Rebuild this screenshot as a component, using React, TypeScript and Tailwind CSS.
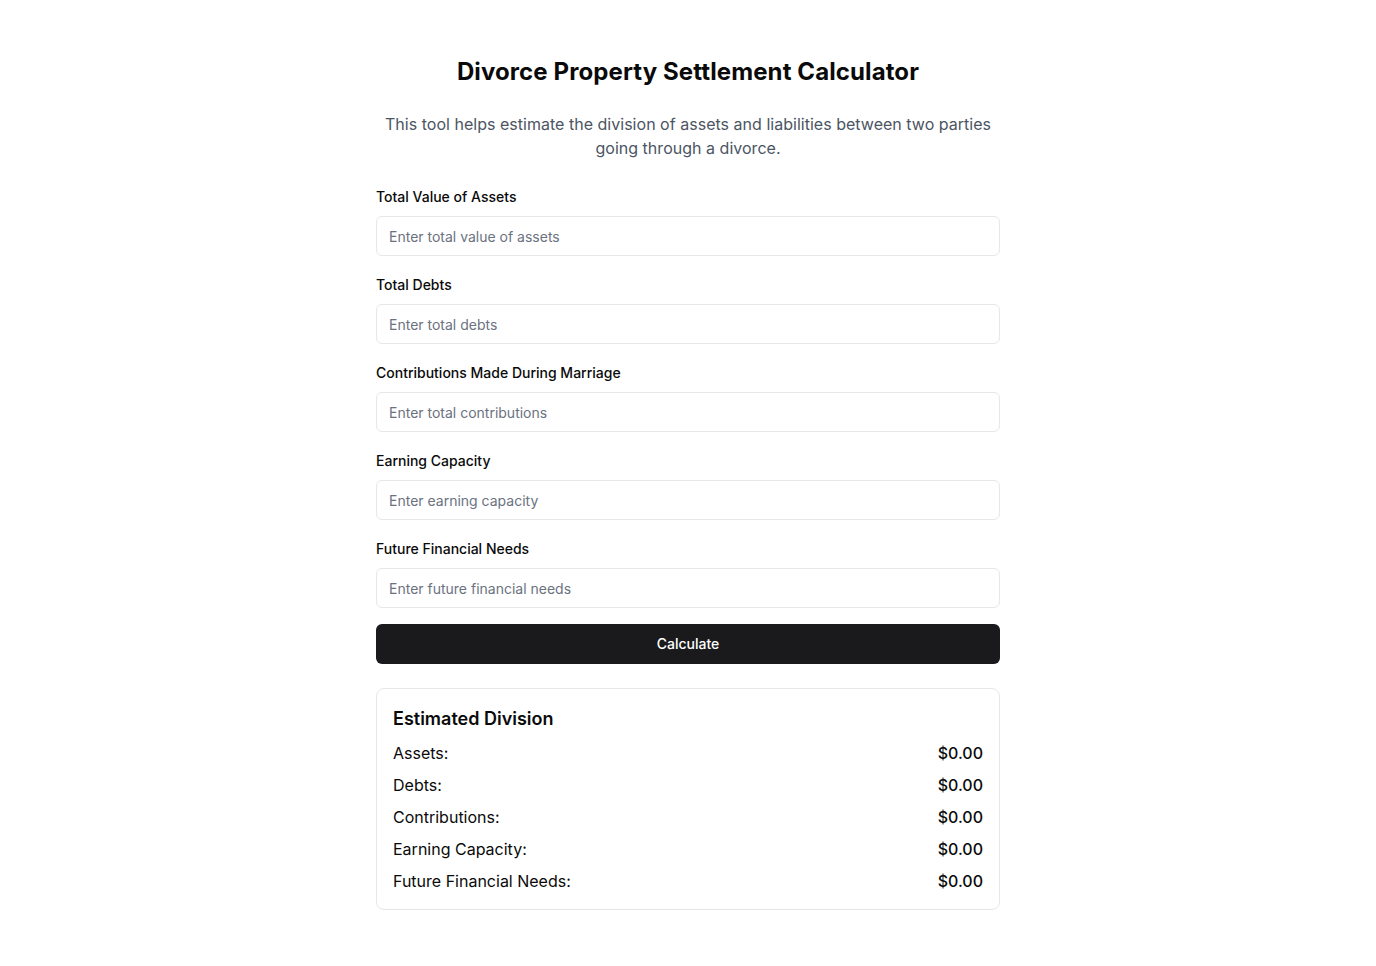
import React, { useState } from 'react';

const fields = [
  { key: 'assets', label: 'Total Value of Assets', placeholder: 'Enter total value of assets' },
  { key: 'debts', label: 'Total Debts', placeholder: 'Enter total debts' },
  { key: 'contributions', label: 'Contributions Made During Marriage', placeholder: 'Enter total contributions' },
  { key: 'earning', label: 'Earning Capacity', placeholder: 'Enter earning capacity' },
  { key: 'needs', label: 'Future Financial Needs', placeholder: 'Enter future financial needs' },
];

const rows = [
  { key: 'assets', label: 'Assets:' },
  { key: 'debts', label: 'Debts:' },
  { key: 'contributions', label: 'Contributions:' },
  { key: 'earning', label: 'Earning Capacity:' },
  { key: 'needs', label: 'Future Financial Needs:' },
];

const App: React.FC = () => {
  const [values, setValues] = useState<Record<string, string>>({});
  const [result, setResult] = useState<Record<string, number>>({});

  const handleCalculate = () => {
    const out: Record<string, number> = {};
    fields.forEach(f => {
      const n = parseFloat(values[f.key] || '0');
      out[f.key] = isNaN(n) ? 0 : n / 2;
    });
    setResult(out);
  };

  return (
    <div className="min-h-screen bg-white font-['Inter',sans-serif] text-[#0a0a0a]">
      <div className="w-[624px] mx-auto pt-[56px] pb-10">
        <h1 className="text-2xl leading-8 font-bold text-center tracking-[0.1px]">Divorce Property Settlement Calculator</h1>
        <p className="mt-6 text-base leading-6 text-[#4b5563] text-center px-2 tracking-[0.02px]">
          This tool helps estimate the division of assets and liabilities between two parties going through a divorce.
        </p>

        <div className="mt-[27px] flex flex-col gap-[19px]">
          {fields.map(f => (
            <div key={f.key} className="flex flex-col gap-[9px]">
              <label className="text-sm leading-5 font-medium">{f.label}</label>
              <input
                type="number"
                value={values[f.key] || ''}
                onChange={e => setValues({ ...values, [f.key]: e.target.value })}
                placeholder={f.placeholder}
                className="h-10 w-full rounded-md border border-[#e5e7eb] px-3 text-sm placeholder:text-[#6b7280] outline-none"
              />
            </div>
          ))}
        </div>

        <button
          onClick={handleCalculate}
          className="mt-4 h-10 w-full rounded-md bg-[#1a1a1c] text-white text-sm font-medium"
        >
          Calculate
        </button>

        <div className="mt-6 rounded-lg border border-[#e5e7eb] p-4">
          <h2 className="text-lg leading-7 font-semibold mb-2">Estimated Division</h2>
          <div className="flex flex-col gap-2">
            {rows.map(r => (
              <div key={r.key} className="flex justify-between text-base leading-6">
                <span>{r.label}</span>
                <span className="font-medium">${(result[r.key] || 0).toFixed(2)}</span>
              </div>
            ))}
          </div>
        </div>
      </div>
    </div>
  );
};

export default App;
